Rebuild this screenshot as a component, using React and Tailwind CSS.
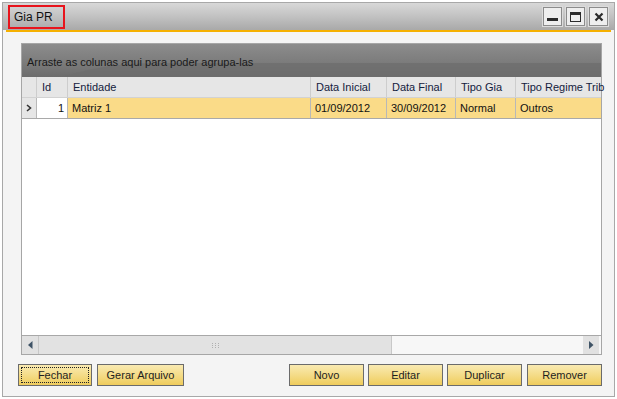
import React from 'react'

const columns = [
  { key: 'id', label: 'Id', w: 'w-[31px] border-r' },
  { key: 'entidade', label: 'Entidade', w: 'w-[243px] border-r' },
  { key: 'ini', label: 'Data Inicial', w: 'w-[76px] border-r' },
  { key: 'fim', label: 'Data Final', w: 'w-[69px] border-r' },
  { key: 'tipo', label: 'Tipo Gia', w: 'w-[60px] border-r' },
  { key: 'regime', label: 'Tipo Regime Trib', w: 'flex-1' },
]

const rows = [
  { id: '1', entidade: 'Matriz 1', ini: '01/09/2012', fim: '30/09/2012', tipo: 'Normal', regime: 'Outros' },
]

export default function App() {
  return (
    <div className="h-[399px] w-[617px] overflow-hidden bg-white pl-[2px] pt-[2px] font-['Liberation_Sans',Arial,sans-serif] text-[11px] text-[#111]">
      <div className="flex h-[395px] w-[613px] flex-col border border-[#a8a8a8] bg-[#f4f4f4]">
        <TitleBar />
        <div className="mx-[3px] h-[2px] bg-[#f5b000]" />

        <div className="flex flex-1 flex-col pl-[18px] pr-[12px] pt-[11px]">
          <Grid />

          <div className="-ml-[3px] mt-[9px] flex items-center">
            <Button focused className="w-[74px]">Fechar</Button>
            <Button className="ml-[5px] w-[87px]">Gerar Arquivo</Button>
            <div className="flex-1" />
            <Button className="w-[75px]">Novo</Button>
            <Button className="ml-[4px] w-[75px]">Editar</Button>
            <Button className="ml-[4px] w-[75px]">Duplicar</Button>
            <Button className="ml-[5px] w-[75px]">Remover</Button>
          </div>
        </div>
      </div>
    </div>
  )
}

function TitleBar() {
  return (
    <div className="flex h-[27px] items-center bg-[linear-gradient(180deg,#d8d8d8_0%,#c4c4c4_45%,#a9a9a9_100%)] pl-[5px] pr-[6px]">
      <div className="flex h-[24px] w-[57px] items-center border-2 border-[#e8141c] pl-[4px] text-[12px] text-[#111]">
        Gia PR
      </div>
      <div className="flex-1" />
      <div className="flex gap-[4px]">
        <WinButton>
          <span className="mt-[6px] h-[3px] w-[11px] bg-[#2b2b2b]" />
        </WinButton>
        <WinButton>
          <span className="h-[10px] w-[11px] border border-t-[3px] border-[#2b2b2b]" />
        </WinButton>
        <WinButton>
          <svg width="10" height="10" viewBox="0 0 10 10" aria-hidden="true">
            <path d="M1.5 1.5 8.5 8.5M8.5 1.5 1.5 8.5" stroke="#2b2b2b" strokeWidth="2.2" fill="none" />
          </svg>
        </WinButton>
      </div>
    </div>
  )
}

function WinButton({ children }) {
  return (
    <div className="flex h-[19px] w-[19px] items-center justify-center border border-[#8c8c8c] bg-[#eeeeee] shadow-[0_0_0_1px_#dcdcdc]">
      {children}
    </div>
  )
}

function Grid() {
  return (
    <div className="flex h-[312px] w-[581px] flex-col border border-[#a6a6a6] bg-white">
      {/* group-by panel */}
      <div className="relative h-[33px] overflow-hidden bg-[linear-gradient(180deg,#8c8c8c_0%,#7c7c7c_55%,#6c6c6c_100%)]">
        <svg className="absolute inset-0" width="579" height="33" aria-hidden="true">
          <path d="M40 33 C70 24 90 20 130 19 L579 19 L579 33 Z" fill="#6e6e6e" opacity="0.75" />
        </svg>
        <div className="relative pl-[5px] pt-[10px] text-[#1a1a1a]">Arraste as colunas aqui para poder agrupa-las</div>
      </div>

      {/* header */}
      <div className="flex h-[21px] border-b border-[#d2d2d2] bg-[#e6e6e6] text-[#14213d]">
        <div className="w-[15px] shrink-0 border-r border-[#cdcdcd]" />
        {columns.map((c) => (
          <div key={c.key} className={`${c.w} flex min-w-0 shrink-0 items-center whitespace-nowrap border-[#cdcdcd] pl-[5px]`}>
            {c.label}
          </div>
        ))}
      </div>

      {/* rows */}
      {rows.map((r) => (
        <div key={r.id} className="flex h-[21px] border-b border-[#a9a9a9] bg-[#fadb88]">
          <div className="flex w-[15px] shrink-0 items-center justify-center border-r border-[#b8b8b8] bg-[#e6e6e6]">
            <svg width="6" height="8" viewBox="0 0 6 8" aria-hidden="true">
              <path d="M1 1 4.5 4 1 7" stroke="#333" strokeWidth="1.6" fill="none" />
            </svg>
          </div>
          <div className="flex w-[31px] shrink-0 items-center justify-end border-r border-[#b8b8b8] bg-white pr-[3px]">{r.id}</div>
          <div className="flex w-[243px] shrink-0 items-center border-r border-[#b8b8b8] pl-[4px]">{r.entidade}</div>
          <div className="flex w-[76px] shrink-0 items-center border-r border-[#b8b8b8] pl-[4px]">{r.ini}</div>
          <div className="flex w-[69px] shrink-0 items-center border-r border-[#b8b8b8] pl-[4px]">{r.fim}</div>
          <div className="flex w-[60px] shrink-0 items-center border-r border-[#b8b8b8] pl-[4px]">{r.tipo}</div>
          <div className="flex flex-1 items-center pl-[4px]">{r.regime}</div>
        </div>
      ))}

      <div className="flex-1" />

      {/* horizontal scrollbar */}
      <div className="flex h-[19px] border-t border-[#a8a8a8] bg-[#f7f7f7]">
        <div className="flex w-[16px] items-center justify-center bg-[#e1e1e1]">
          <svg width="5" height="8" viewBox="0 0 5 8" aria-hidden="true">
            <path d="M4.5 0 0 4 4.5 8Z" fill="#3f5366" />
          </svg>
        </div>
        <div className="flex w-[354px] items-center justify-center border-x border-[#c8c8c8] bg-[#e2e2e2]">
          <svg width="7" height="5" viewBox="0 0 7 5" aria-hidden="true">
            <g fill="#b0b0b0">
              <rect x="0" y="0" width="1" height="1" /><rect x="3" y="0" width="1" height="1" /><rect x="6" y="0" width="1" height="1" />
              <rect x="0" y="2" width="1" height="1" /><rect x="3" y="2" width="1" height="1" /><rect x="6" y="2" width="1" height="1" />
              <rect x="0" y="4" width="1" height="1" /><rect x="3" y="4" width="1" height="1" /><rect x="6" y="4" width="1" height="1" />
            </g>
          </svg>
        </div>
        <div className="flex-1" />
        <div className="flex w-[16px] items-center justify-center bg-[#e1e1e1]">
          <svg width="5" height="8" viewBox="0 0 5 8" aria-hidden="true">
            <path d="M0 0 4.5 4 0 8Z" fill="#3f5366" />
          </svg>
        </div>
        <div className="w-[2px]" />
      </div>
    </div>
  )
}

function Button({ children, className = '', focused = false }) {
  return (
    <div className={`${className} flex h-[22px] items-center justify-center border border-[#6b6b6b] bg-[linear-gradient(180deg,#f9eab2_0%,#f4dc88_50%,#efcc5c_100%)] p-[2px] text-[#1e1e1e]`}>
      <div className={`flex h-full w-full items-center justify-center ${focused ? 'border border-dotted border-[#222]' : ''}`}>
        {children}
      </div>
    </div>
  )
}
